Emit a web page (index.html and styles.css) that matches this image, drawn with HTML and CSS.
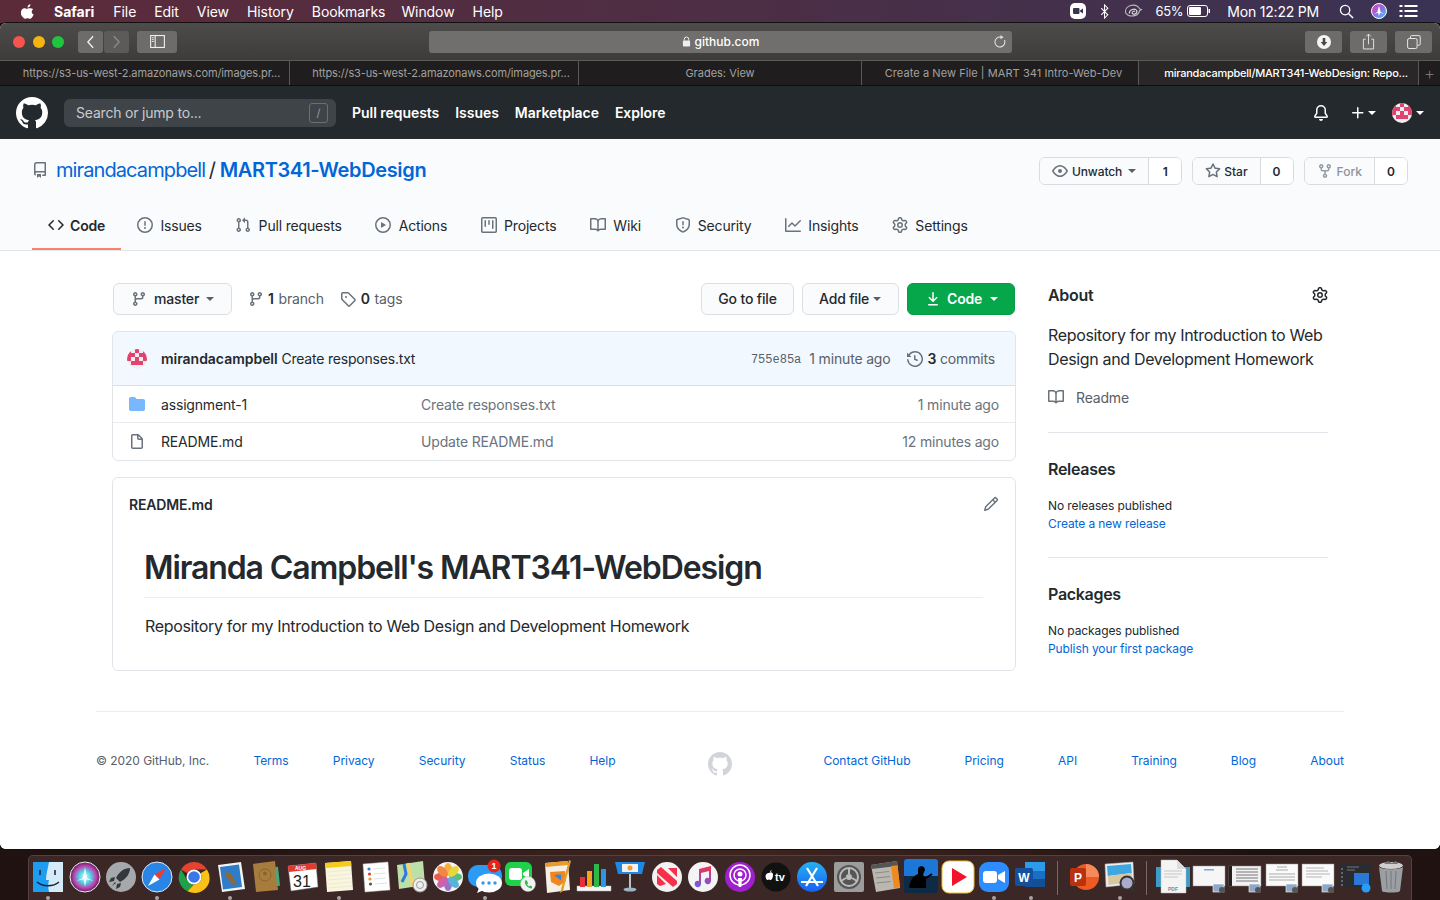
FILE: index.html
```html
<!DOCTYPE html>
<html lang="en">
<head>
<meta charset="utf-8">
<title>mirandacampbell/MART341-WebDesign</title>
<link rel="stylesheet" href="styles.css">
</head>
<body>
<svg class="defs" aria-hidden="true">
<defs><clipPath id="ac"><circle cx="10" cy="10" r="10"/></clipPath></defs>
<symbol id="i-mark" viewBox="0 0 16 16"><path fill-rule="evenodd" d="M8 0C3.58 0 0 3.58 0 8c0 3.54 2.29 6.53 5.47 7.59.4.07.55-.17.55-.38 0-.19-.01-.82-.01-1.49-2.01.37-2.53-.49-2.69-.94-.09-.23-.48-.94-.82-1.13-.28-.15-.68-.52-.01-.53.63-.01 1.08.58 1.23.82.72 1.21 1.87.87 2.33.66.07-.52.28-.87.51-1.07-1.78-.2-3.64-.89-3.64-3.95 0-.87.31-1.59.82-2.15-.08-.2-.36-1.02.08-2.12 0 0 .67-.21 2.2.82.64-.18 1.32-.27 2-.27.68 0 1.36.09 2 .27 1.53-1.04 2.2-.82 2.2-.82.44 1.1.16 1.92.08 2.12.51.56.82 1.27.82 2.15 0 3.07-1.87 3.75-3.65 3.95.29.25.54.73.54 1.48 0 1.07-.01 1.93-.01 2.2 0 .21.15.46.55.38A8.013 8.013 0 0016 8c0-4.42-3.58-8-8-8z"/></symbol>
<symbol id="i-repo" viewBox="0 0 16 16"><path fill-rule="evenodd" d="M2 2.5A2.5 2.5 0 014.5 0h8.75a.75.75 0 01.75.75v12.5a.75.75 0 01-.75.75h-2.5a.75.75 0 110-1.5h1.75v-2h-8a1 1 0 00-.714 1.7.75.75 0 01-1.072 1.05A2.495 2.495 0 012 11.5v-9zm10.5-1V9h-8c-.356 0-.694.074-1 .208V2.5a1 1 0 011-1h8zM5 12.25v3.25a.25.25 0 00.4.2l1.45-1.087a.25.25 0 01.3 0L8.6 15.7a.25.25 0 00.4-.2v-3.25a.25.25 0 00-.25-.25h-3.5a.25.25 0 00-.25.25z"/></symbol>
<symbol id="i-eye" viewBox="0 0 16 16"><path fill-rule="evenodd" d="M1.679 7.932c.412-.621 1.242-1.75 2.366-2.717C5.175 4.242 6.527 3.5 8 3.5c1.473 0 2.824.742 3.955 1.715 1.124.967 1.954 2.096 2.366 2.717a.119.119 0 010 .136c-.412.621-1.242 1.75-2.366 2.717C10.825 11.758 9.473 12.5 8 12.5c-1.473 0-2.824-.742-3.955-1.715C2.921 9.818 2.091 8.69 1.679 8.068a.119.119 0 010-.136zM8 2c-1.981 0-3.67.992-4.933 2.078C1.797 5.169.88 6.423.43 7.1a1.619 1.619 0 000 1.798c.45.678 1.367 1.932 2.637 3.024C4.329 13.008 6.019 14 8 14c1.981 0 3.67-.992 4.933-2.078 1.27-1.091 2.187-2.345 2.637-3.023a1.619 1.619 0 000-1.798c-.45-.678-1.367-1.932-2.637-3.023C11.671 2.992 9.981 2 8 2zm0 8a2 2 0 100-4 2 2 0 000 4z"/></symbol>
<symbol id="i-star" viewBox="0 0 16 16"><path fill-rule="evenodd" d="M8 .25a.75.75 0 01.673.418l1.882 3.815 4.21.612a.75.75 0 01.416 1.279l-3.046 2.97.719 4.192a.75.75 0 01-1.088.791L8 12.347l-3.766 1.98a.75.75 0 01-1.088-.79l.72-4.194L.818 6.374a.75.75 0 01.416-1.28l4.21-.611L7.327.668A.75.75 0 018 .25zm0 2.445L6.615 5.5a.75.75 0 01-.564.41l-3.097.45 2.24 2.184a.75.75 0 01.216.664l-.528 3.084 2.769-1.456a.75.75 0 01.698 0l2.77 1.456-.53-3.084a.75.75 0 01.216-.664l2.24-2.183-3.096-.45a.75.75 0 01-.564-.41L8 2.694v.001z"/></symbol>
<symbol id="i-fork" viewBox="0 0 16 16"><path fill-rule="evenodd" d="M5 3.25a.75.75 0 11-1.5 0 .75.75 0 011.5 0zm0 2.122a2.25 2.25 0 10-1.5 0v.878A2.25 2.25 0 005.75 8.5h1.5v2.128a2.251 2.251 0 101.5 0V8.5h1.5a2.25 2.25 0 002.25-2.25v-.878a2.25 2.25 0 10-1.5 0v.878a.75.75 0 01-.75.75h-4.5A.75.75 0 015 6.25v-.878zm3.75 7.378a.75.75 0 11-1.5 0 .75.75 0 011.5 0zm3-8.75a.75.75 0 100-1.5.75.75 0 000 1.5z"/></symbol>
<symbol id="i-code" viewBox="0 0 16 16"><path fill-rule="evenodd" d="M4.72 3.22a.75.75 0 011.06 1.06L2.06 8l3.72 3.72a.75.75 0 11-1.06 1.06L.47 8.53a.75.75 0 010-1.06l4.25-4.25zm6.56 0a.75.75 0 10-1.06 1.06L13.94 8l-3.72 3.72a.75.75 0 101.06 1.06l4.25-4.25a.75.75 0 000-1.06l-4.25-4.25z"/></symbol>
<symbol id="i-issue" viewBox="0 0 16 16"><path fill-rule="evenodd" d="M8 1.5a6.5 6.5 0 100 13 6.5 6.5 0 000-13zM0 8a8 8 0 1116 0A8 8 0 010 8zm9 3a1 1 0 11-2 0 1 1 0 012 0zm-.25-6.25a.75.75 0 00-1.5 0v3.5a.75.75 0 001.5 0v-3.5z"/></symbol>
<symbol id="i-pr" viewBox="0 0 16 16"><path fill-rule="evenodd" d="M7.177 3.073L9.573.677A.25.25 0 0110 .854v4.792a.25.25 0 01-.427.177L7.177 3.427a.25.25 0 010-.354zM3.75 2.5a.75.75 0 100 1.5.75.75 0 000-1.5zm-2.25.75a2.25 2.25 0 113 2.122v5.256a2.251 2.251 0 11-1.5 0V5.372A2.25 2.25 0 011.5 3.25zM11 2.5h-1V4h1a1 1 0 011 1v5.628a2.251 2.251 0 101.5 0V5A2.5 2.5 0 0011 2.5zm1 10.25a.75.75 0 111.5 0 .75.75 0 01-1.5 0zM3.75 12a.75.75 0 100 1.5.75.75 0 000-1.5z"/></symbol>
<symbol id="i-play" viewBox="0 0 16 16"><path fill-rule="evenodd" d="M1.5 8a6.5 6.5 0 1113 0 6.5 6.5 0 01-13 0zM8 0a8 8 0 100 16A8 8 0 008 0zM6.379 5.227A.25.25 0 006 5.442v5.117a.25.25 0 00.379.214l4.264-2.559a.25.25 0 000-.428L6.379 5.227z"/></symbol>
<symbol id="i-project" viewBox="0 0 16 16"><path fill-rule="evenodd" d="M1.75 0A1.75 1.75 0 000 1.75v12.5C0 15.216.784 16 1.75 16h12.5A1.75 1.75 0 0016 14.25V1.75A1.75 1.75 0 0014.25 0H1.75zM1.5 1.75a.25.25 0 01.25-.25h12.5a.25.25 0 01.25.25v12.5a.25.25 0 01-.25.25H1.75a.25.25 0 01-.25-.25V1.75zM11.75 3a.75.75 0 00-.75.75v7.5a.75.75 0 001.5 0v-7.5a.75.75 0 00-.75-.75zm-8.25.75a.75.75 0 011.5 0v5.5a.75.75 0 01-1.5 0v-5.5zM8 3a.75.75 0 00-.75.75v3.5a.75.75 0 001.5 0v-3.5A.75.75 0 008 3z"/></symbol>
<symbol id="i-book" viewBox="0 0 16 16"><path fill-rule="evenodd" d="M0 1.75A.75.75 0 01.75 1h4.253c1.227 0 2.317.59 3 1.501A3.744 3.744 0 0111.006 1h4.245a.75.75 0 01.75.75v10.5a.75.75 0 01-.75.75h-4.507a2.25 2.25 0 00-1.591.659l-.622.621a.75.75 0 01-1.06 0l-.622-.621A2.25 2.25 0 005.258 13H.75a.75.75 0 01-.75-.75V1.75zm8.755 3a2.25 2.25 0 012.25-2.25H14.5v9h-3.757c-.71 0-1.4.201-1.992.572l.004-7.322zm-1.504 7.324l.004-5.073-.002-2.253A2.25 2.25 0 005.003 2.5H1.5v9h3.757a3.75 3.75 0 011.994.574z"/></symbol>
<symbol id="i-shield" viewBox="0 0 16 16"><path fill-rule="evenodd" d="M7.467.133a1.75 1.75 0 011.066 0l5.25 1.68A1.75 1.75 0 0115 3.48V7c0 1.566-.32 3.182-1.303 4.682-.983 1.498-2.585 2.813-5.032 3.855a1.7 1.7 0 01-1.33 0c-2.447-1.042-4.049-2.357-5.032-3.855C1.32 10.182 1 8.566 1 7V3.48a1.75 1.75 0 011.217-1.667l5.25-1.68zm.61 1.429a.25.25 0 00-.153 0l-5.25 1.68a.25.25 0 00-.174.238V7c0 1.358.275 2.666 1.057 3.86.784 1.194 2.121 2.34 4.366 3.297a.2.2 0 00.154 0c2.245-.956 3.582-2.104 4.366-3.298C13.225 9.666 13.5 8.36 13.5 7V3.48a.25.25 0 00-.174-.237l-5.25-1.68zM9 10.5a1 1 0 11-2 0 1 1 0 012 0zm-.25-5.75a.75.75 0 10-1.5 0v3a.75.75 0 001.5 0v-3z"/></symbol>
<symbol id="i-graph" viewBox="0 0 16 16"><path fill-rule="evenodd" d="M1.5 1.75a.75.75 0 00-1.5 0v12.5c0 .414.336.75.75.75h14.5a.75.75 0 000-1.5H1.5V1.75zm14.28 2.53a.75.75 0 00-1.06-1.06L10 7.94 7.53 5.47a.75.75 0 00-1.06 0L3.22 8.72a.75.75 0 001.06 1.06L7 7.06l2.47 2.47a.75.75 0 001.06 0l5.25-5.25z"/></symbol>
<symbol id="i-gear" viewBox="0 0 16 16"><path fill-rule="evenodd" d="M7.429 1.525a6.593 6.593 0 011.142 0c.036.003.108.036.137.146l.289 1.105c.147.56.55.967.997 1.189.174.086.341.183.501.29.417.278.97.423 1.53.27l1.102-.303c.11-.03.175.016.195.046.219.31.41.641.573.989.014.031.022.11-.059.19l-.815.806c-.411.406-.562.957-.53 1.456a4.588 4.588 0 010 .582c-.032.499.119 1.05.53 1.456l.815.806c.08.08.073.159.059.19a6.494 6.494 0 01-.573.99c-.02.029-.086.074-.195.045l-1.103-.303c-.559-.153-1.112-.008-1.529.27-.16.107-.327.204-.5.29-.449.222-.851.628-.998 1.189l-.289 1.105c-.029.11-.101.143-.137.146a6.613 6.613 0 01-1.142 0c-.036-.003-.108-.037-.137-.146l-.289-1.105c-.147-.56-.55-.967-.997-1.189a4.502 4.502 0 01-.501-.29c-.417-.278-.97-.423-1.53-.27l-1.102.303c-.11.03-.175-.016-.195-.046a6.492 6.492 0 01-.573-.989c-.014-.031-.022-.11.059-.19l.815-.806c.411-.406.562-.957.53-1.456a4.587 4.587 0 010-.582c.032-.499-.119-1.05-.53-1.456l-.815-.806c-.08-.08-.073-.159-.059-.19a6.44 6.44 0 01.573-.99c.02-.029.086-.075.195-.045l1.103.303c.559.153 1.112.008 1.529-.27.16-.107.327-.204.5-.29.449-.222.851-.628.998-1.189l.289-1.105c.029-.11.101-.143.137-.146zM8 0c-.236 0-.47.01-.701.03-.743.065-1.29.615-1.458 1.261l-.29 1.106c-.017.066-.078.158-.211.224a5.994 5.994 0 00-.668.386c-.123.082-.233.09-.3.071L3.27 2.776c-.644-.177-1.392.02-1.82.63a7.977 7.977 0 00-.704 1.217c-.315.675-.111 1.422.363 1.891l.815.806c.05.048.098.147.088.294a6.084 6.084 0 000 .772c.01.147-.038.246-.088.294l-.815.806c-.474.469-.678 1.216-.363 1.891.2.428.436.835.704 1.218.428.609 1.176.806 1.82.63l1.103-.303c.066-.019.176-.011.299.071.213.143.436.272.668.386.133.066.194.158.212.224l.289 1.106c.169.646.715 1.196 1.458 1.26a8.094 8.094 0 001.402 0c.743-.064 1.29-.614 1.458-1.26l.29-1.106c.017-.066.078-.158.211-.224a5.98 5.98 0 00.668-.386c.123-.082.233-.09.3-.071l1.102.302c.644.177 1.392-.02 1.82-.63.268-.382.505-.789.704-1.217.315-.675.111-1.422-.364-1.891l-.814-.806c-.05-.048-.098-.147-.088-.294a6.1 6.1 0 000-.772c-.01-.147.039-.246.088-.294l.814-.806c.475-.469.679-1.216.364-1.891a7.992 7.992 0 00-.704-1.218c-.428-.609-1.176-.806-1.82-.63l-1.103.303c-.066.019-.176.011-.299-.071a5.991 5.991 0 00-.668-.386c-.133-.066-.194-.158-.212-.224L10.16 1.29C9.99.645 9.444.095 8.701.031A8.094 8.094 0 008 0zm1.5 8a1.5 1.5 0 11-3 0 1.5 1.5 0 013 0zM11 8a3 3 0 11-6 0 3 3 0 016 0z"/></symbol>
<symbol id="i-branch" viewBox="0 0 16 16"><path fill-rule="evenodd" d="M11.75 2.5a.75.75 0 100 1.5.75.75 0 000-1.5zm-2.25.75a2.25 2.25 0 113 2.122V6A2.5 2.5 0 0110 8.5H6a1 1 0 00-1 1v1.128a2.251 2.251 0 11-1.5 0V5.372a2.25 2.25 0 111.5 0v1.836A2.492 2.492 0 016 7h4a1 1 0 001-1v-.628A2.25 2.25 0 019.5 3.25zM4.25 12a.75.75 0 100 1.5.75.75 0 000-1.5zM3.5 3.25a.75.75 0 111.5 0 .75.75 0 01-1.5 0z"/></symbol>
<symbol id="i-tag" viewBox="0 0 16 16"><path fill-rule="evenodd" d="M2.5 7.775V2.75a.25.25 0 01.25-.25h5.025a.25.25 0 01.177.073l6.25 6.25a.25.25 0 010 .354l-5.025 5.025a.25.25 0 01-.354 0l-6.25-6.25a.25.25 0 01-.073-.177zm-1.5 0V2.75C1 1.784 1.784 1 2.75 1h5.025c.464 0 .91.184 1.238.513l6.25 6.25a1.75 1.75 0 010 2.474l-5.026 5.026a1.75 1.75 0 01-2.474 0l-6.25-6.25A1.75 1.75 0 011 7.775zM6 5a1 1 0 100 2 1 1 0 000-2z"/></symbol>
<symbol id="i-download" viewBox="0 0 16 16"><path fill-rule="evenodd" d="M7.47 10.78a.75.75 0 001.06 0l3.75-3.75a.75.75 0 00-1.06-1.06L8.75 8.44V1.75a.75.75 0 00-1.5 0v6.69L4.78 5.97a.75.75 0 00-1.06 1.06l3.75 3.75zM3.75 13a.75.75 0 000 1.5h8.5a.75.75 0 000-1.5h-8.5z"/></symbol>
<symbol id="i-history" viewBox="0 0 16 16"><path fill-rule="evenodd" d="M1.643 3.143L.427 1.927A.25.25 0 000 2.104V5.75c0 .138.112.25.25.25h3.646a.25.25 0 00.177-.427L2.715 4.215a6.5 6.5 0 11-1.18 4.458.75.75 0 10-1.493.154 8.001 8.001 0 101.6-5.684zM7.75 4a.75.75 0 01.75.75v2.992l2.028.812a.75.75 0 01-.557 1.392l-2.5-1A.75.75 0 017 8.25v-3.5A.75.75 0 017.75 4z"/></symbol>
<symbol id="i-file" viewBox="0 0 16 16"><path fill-rule="evenodd" d="M3.75 1.5a.25.25 0 00-.25.25v11.5c0 .138.112.25.25.25h8.5a.25.25 0 00.25-.25V6H9.75A1.75 1.75 0 018 4.25V1.5H3.75zm5.75.56v2.19c0 .138.112.25.25.25h2.19L9.5 2.06zM2 1.75C2 .784 2.784 0 3.75 0h5.086c.464 0 .909.184 1.237.513l3.414 3.414c.329.328.513.773.513 1.237v8.086A1.75 1.75 0 0112.25 15h-8.5A1.75 1.75 0 012 13.25V1.75z"/></symbol>
<symbol id="i-folder" viewBox="0 0 16 16"><path d="M1.75 1A1.75 1.75 0 000 2.75v10.5C0 14.216.784 15 1.75 15h12.5A1.75 1.75 0 0016 13.25v-8.5A1.75 1.75 0 0014.25 3h-6.5a.25.25 0 01-.2-.1l-.9-1.2c-.33-.44-.85-.7-1.4-.7h-4z"/></symbol>
<symbol id="i-pencil" viewBox="0 0 16 16"><path fill-rule="evenodd" d="M11.013 1.427a1.75 1.75 0 012.474 0l1.086 1.086a1.75 1.75 0 010 2.474l-8.61 8.61c-.21.21-.47.364-.756.445l-3.251.93a.75.75 0 01-.927-.928l.929-3.25a1.75 1.75 0 01.445-.758l8.61-8.61zm1.414 1.06a.25.25 0 00-.354 0L10.811 3.75l1.439 1.44 1.263-1.263a.25.25 0 000-.354l-1.086-1.086zM11.189 6.25L9.75 4.81l-6.286 6.287a.25.25 0 00-.064.108l-.558 1.953 1.953-.558a.249.249 0 00.108-.064l6.286-6.286z"/></symbol>
<symbol id="i-bell" viewBox="0 0 16 16"><path d="M8 16a2 2 0 001.985-1.75c.017-.137-.097-.25-.235-.25h-3.5c-.138 0-.252.113-.235.25A2 2 0 008 16z"/><path fill-rule="evenodd" d="M8 1.5A3.5 3.5 0 004.5 5v2.947c0 .346-.102.683-.294.97l-1.703 2.556a.018.018 0 00-.003.01l.001.006c0 .002.002.004.004.006a.017.017 0 00.006.004l.007.001h10.964l.007-.001a.018.018 0 00.006-.004.016.016 0 00.004-.006l.001-.007a.017.017 0 00-.003-.01l-1.703-2.554a1.75 1.75 0 01-.294-.97V5A3.5 3.5 0 008 1.5zM3 5a5 5 0 0110 0v2.947c0 .05.015.098.042.139l1.703 2.555A1.518 1.518 0 0113.482 13H2.518a1.518 1.518 0 01-1.263-2.36l1.703-2.554A.25.25 0 003 7.947V5z"/></symbol>
<symbol id="i-plus" viewBox="0 0 16 16"><path fill-rule="evenodd" d="M7.75 2a.75.75 0 01.75.75V7h4.25a.75.75 0 110 1.5H8.5v4.25a.75.75 0 11-1.5 0V8.5H2.75a.75.75 0 010-1.5H7V2.75A.75.75 0 017.75 2z"/></symbol>
<symbol id="i-identicon" viewBox="0 0 20 20"><circle cx="10" cy="10" r="10" fill="#f0eeee"/><g clip-path="url(#ac)"><path fill="#e0436f" d="M0 0h4v4H0zM8 0h4v4H8zM16 0h4v4h-4zM0 4h8v4H0zM12 4h8v4h-8zM0 8h4v4H0zM8 8h4v4H8zM16 8h4v4h-4zM4 12h12v4H4z"/></g></symbol>
<symbol id="i-shot" viewBox="0 0 36 36"><rect x="2" y="7" width="32" height="20" fill="#f6f6f6" stroke="#999" stroke-width=".5"/><rect x="13" y="10" width="10" height="1.5" fill="#7fa8d8"/><rect x="22" y="25" width="11" height="8" fill="#8fa8c8" stroke="#fff" stroke-width=".6"/><circle cx="31" cy="31" r="3" fill="#555"/></symbol>
</svg>

<header class="menubar">
  <nav class="menu-left">
    <svg class="apple" viewBox="0 0 16 18"><path fill="#fff" d="M11.6 0c.1 1.1-.3 2.100-.9 2.900-.7.800-1.700 1.400-2.700 1.300-.1-1 .4-2.100 1-2.800C9.600.6 10.700.1 11.600 0zM15 6.200c-1.100.7-1.800 1.800-1.800 3.100 0 1.500.9 2.800 2.300 3.400-.4 1.200-1 2.300-1.800 3.300-.7 1-1.500 2-2.700 2-1.200 0-1.600-.7-3-.7s-1.900.7-3 .7c-1.200 0-2-1.100-2.800-2.100C.6 14.400-.4 11.900 0 9.400.3 7.100 2 5.100 4.300 5c1.200 0 2.300.8 3 .8.700 0 2-1 3.400-.8 1.700.1 3.300.5 4.300 1.200z"/></svg>
    <span class="menu-app">Safari</span><span>File</span><span>Edit</span><span>View</span><span>History</span><span class="m-book">Bookmarks</span><span>Window</span><span>Help</span>
  </nav>
  <div class="menu-right">
    <svg class="st-zoom" viewBox="0 0 16 16"><rect width="16" height="16" rx="5" fill="#fff"/><rect x="3" y="5" width="6.500" height="6" rx="1" fill="#3c3350"/><path d="M10 7.500l3-2v5l-3-2z" fill="#3c3350"/></svg>
    <svg class="st-bt" viewBox="0 0 10 16"><path fill="none" stroke="#fff" stroke-width="1.100" d="M1 4.500l7 7-3.500 3.500V1L8 4.500l-7 7"/></svg>
    <svg class="st-cc" viewBox="0 0 20 16"><path d="M2 9a8 7 0 0115-4l2 1-2 1a8 7 0 01-15 2z" fill="none" stroke="#bbb" stroke-width="1.200"/><path d="M6 10c0-4 6-6 8-3 1 3-3 5-5 3 0-2 2-3 3-2" fill="none" stroke="#ddd" stroke-width="1.200"/></svg>
    <span class="st-pct">65%</span>
    <svg class="st-batt" viewBox="0 0 24 12"><rect x=".5" y=".5" width="20" height="11" rx="2.500" fill="none" stroke="#fff"/><rect x="2" y="2" width="12" height="8" rx="1" fill="#fff"/><rect x="21.500" y="4" width="1.500" height="4" fill="#fff"/></svg>
    <span class="st-time">Mon 12:22 PM</span>
    <svg class="st-search" viewBox="0 0 16 16"><circle cx="6.500" cy="6.500" r="5" fill="none" stroke="#fff" stroke-width="1.400"/><path d="M10.300 10.300L15 15" stroke="#fff" stroke-width="1.600"/></svg>
    <svg class="st-siri" viewBox="0 0 16 16"><defs><linearGradient id="sg" x1="0" y1="0" x2="1" y2="1"><stop offset="0" stop-color="#f53a9a"/><stop offset=".5" stop-color="#8a6ae8"/><stop offset="1" stop-color="#3ad8e8"/></linearGradient></defs><circle cx="8" cy="8" r="7.500" fill="url(#sg)" stroke="#fff"/><path d="M8 3l1.500 5L8 13 6.500 8z" fill="#fff"/><path d="M3 11l5-3 5 3-5-1.500z" fill="#fff"/></svg>
    <svg class="st-list" viewBox="0 0 18 14"><path fill="#fff" d="M0 1h3v2H0zM5 1h13v2H5zM0 6h3v2H0zM5 6h13v2H5zM0 11h3v2H0zM5 11h13v2H5z"/></svg>
  </div>
</header>

<div class="window">
  <div class="toolbar">
    <div class="lights"><i class="light red"></i><i class="light yellow"></i><i class="light green"></i></div>
    <div class="navbtns">
      <span class="tbtn back"><svg viewBox="0 0 10 16"><path d="M8 1.500L2 8l6 6.500" fill="none" stroke="#f2f2f2" stroke-width="1.500"/></svg></span>
      <span class="tbtn fwd"><svg viewBox="0 0 10 16"><path d="M2 1.500L8 8l-6 6.500" fill="none" stroke="#8c8b8a" stroke-width="1.500"/></svg></span>
    </div>
    <span class="tbtn sidebar"><svg viewBox="0 0 16 14"><rect x=".6" y=".6" width="14.800" height="12.800" fill="none" stroke="#eee" stroke-width="1.200"/><path d="M5.500 1v12" stroke="#eee" stroke-width="1.200"/><path d="M2 3h2M2 5h2M2 7h2" stroke="#eee"/></svg></span>
    <div class="urlbar">
      <span class="url"><svg viewBox="0 0 10 12"><path d="M2.500 5V3.500a2.500 2.500 0 015 0V5" fill="none" stroke="#eee" stroke-width="1.100"/><rect x="1" y="5" width="8" height="6.500" rx="1" fill="#eee"/></svg>github.com</span>
      <svg class="reload" viewBox="0 0 14 14"><path d="M11.500 5a5 5 0 11-3.500-2.900" fill="none" stroke="#e2e2e2" stroke-width="1.100"/><path d="M7.500 0l3 2.200-3 2z" fill="#e2e2e2"/></svg>
    </div>
    <div class="rightbtns">
      <span class="tbtn wide"><svg viewBox="0 0 14 14"><circle cx="7" cy="7" r="7" fill="#f4f4f4"/><path d="M5.700 3h2.600v4h2L7 11 3.700 7h2z" fill="#4a4847"/></svg></span>
      <span class="tbtn wide"><svg class="tall" viewBox="0 0 14 18"><path d="M4 6.500H1.500v10.500h11V6.500H10" fill="none" stroke="#e6e6e6"/><path d="M7 12V1M4.500 3.500L7 1l2.500 2.500" fill="none" stroke="#e6e6e6"/></svg></span>
      <span class="tbtn wide"><svg viewBox="0 0 14 14"><rect x=".6" y="3.500" width="9.500" height="10" rx="1.500" fill="none" stroke="#e6e6e6"/><path d="M3.500 3V1.800a1.200 1.200 0 011.200-1.200h7.300a1.200 1.200 0 011.200 1.200V9a1.200 1.200 0 01-1.200 1.200h-1.500" fill="none" stroke="#e6e6e6"/></svg></span>
    </div>
  </div>
  <div class="tabs">
    <div class="tab t-url">https://s3-us-west-2.amazonaws.com/images.pr...</div>
    <div class="tab t-url">https://s3-us-west-2.amazonaws.com/images.pr...</div>
    <div class="tab">Grades: View</div>
    <div class="tab t-new">Create a New File | MART 341 Intro-Web-Dev</div>
    <div class="tab active">mirandacampbell/MART341-WebDesign: Repo...</div>
    <div class="tab add">+</div>
  </div>

  <div class="page">
    <div class="gh-header">
      <svg class="gh-logo"><use href="#i-mark"/></svg>
      <div class="gh-search"><span>Search or jump to...</span><kbd>/</kbd></div>
      <nav class="gh-nav"><a>Pull requests</a><a>Issues</a><a>Marketplace</a><a>Explore</a></nav>
      <div class="gh-actions">
        <svg class="ic16 white"><use href="#i-bell"/></svg>
        <span class="gh-plus"><svg class="ic16 white"><use href="#i-plus"/></svg><i class="caret light-caret"></i></span>
        <span class="gh-avatar"><svg class="av20"><use href="#i-identicon"/></svg><i class="caret light-caret"></i></span>
      </div>
    </div>

    <div class="pagehead">
      <div class="pagehead-top">
        <h1 class="repo-title">
          <svg class="ic16 gray"><use href="#i-repo"/></svg>
          <a class="owner">mirandacampbell</a><span class="slash">/</span><a class="repo">MART341-WebDesign</a>
        </h1>
        <div class="repo-actions">
          <div class="pair"><span class="pair-btn unwatch"><svg class="ic16 gray"><use href="#i-eye"/></svg>Unwatch<i class="caret dark-caret wgap"></i></span><span class="pair-count">1</span></div>
          <div class="pair"><span class="pair-btn starb"><svg class="ic16 gray"><use href="#i-star"/></svg>Star</span><span class="pair-count">0</span></div>
          <div class="pair"><span class="pair-btn muted"><svg class="ic16 muted-ic"><use href="#i-fork"/></svg>Fork</span><span class="pair-count">0</span></div>
        </div>
      </div>
      <nav class="repo-nav">
        <a class="rtab selected"><svg class="ic16 dark"><use href="#i-code"/></svg>Code</a>
        <a class="rtab"><svg class="ic16 gray"><use href="#i-issue"/></svg>Issues</a>
        <a class="rtab"><svg class="ic16 gray"><use href="#i-pr"/></svg>Pull requests</a>
        <a class="rtab"><svg class="ic16 gray"><use href="#i-play"/></svg>Actions</a>
        <a class="rtab"><svg class="ic16 gray"><use href="#i-project"/></svg>Projects</a>
        <a class="rtab"><svg class="ic16 gray"><use href="#i-book"/></svg>Wiki</a>
        <a class="rtab"><svg class="ic16 gray"><use href="#i-shield"/></svg>Security</a>
        <a class="rtab"><svg class="ic16 gray"><use href="#i-graph"/></svg>Insights</a>
        <a class="rtab"><svg class="ic16 gray"><use href="#i-gear"/></svg>Settings</a>
      </nav>
    </div>

    <main class="container">
      <section class="main-col">
        <div class="filebar">
          <span class="btn master"><svg class="ic16 gray"><use href="#i-branch"/></svg><b>master</b><i class="caret dark-caret"></i></span>
          <span class="meta first"><svg class="ic16 gray"><use href="#i-branch"/></svg><span><b>1</b> branch</span></span>
          <span class="meta second"><svg class="ic16 gray"><use href="#i-tag"/></svg><span><b>0</b> tags</span></span>
          <span class="spacer"></span>
          <span class="btn gofile">Go to file</span>
          <span class="btn addfile">Add file<i class="caret dark-caret"></i></span>
          <span class="btn primary"><svg class="ic16 white"><use href="#i-download"/></svg>Code<i class="caret light-caret"></i></span>
        </div>
        <div class="filebox">
          <div class="commit-row">
            <svg class="av20"><use href="#i-identicon"/></svg>
            <span class="commit-msg"><b>mirandacampbell</b> Create responses.txt</span>
            <span class="spacer"></span>
            <code class="sha">755e85a</code>
            <span class="commit-age">1 minute ago</span>
            <span class="commits"><svg class="ic16 gray"><use href="#i-history"/></svg><span><b>3</b> commits</span></span>
          </div>
          <div class="file-row"><svg class="ic16 folder"><use href="#i-folder"/></svg><span class="fname">assignment-1</span><span class="fmsg">Create responses.txt</span><span class="fage">1 minute ago</span></div>
          <div class="file-row"><svg class="ic16 gray"><use href="#i-file"/></svg><span class="fname">README.md</span><span class="fmsg">Update README.md</span><span class="fage">12 minutes ago</span></div>
        </div>
        <article class="readme">
          <div class="readme-head"><b>README.md</b><svg class="ic16 gray"><use href="#i-pencil"/></svg></div>
          <div class="readme-body">
            <h2>Miranda Campbell's MART341-WebDesign</h2>
            <p>Repository for my Introduction to Web Design and Development Homework</p>
          </div>
        </article>
      </section>
      <aside class="side">
        <section class="side-sec about">
          <div class="side-title"><h3>About</h3><svg class="ic16 dark"><use href="#i-gear"/></svg></div>
          <p class="desc">Repository for my Introduction to Web Design and Development Homework</p>
          <div class="readme-link"><svg class="ic16 gray"><use href="#i-book"/></svg>Readme</div>
        </section>
        <section class="side-sec">
          <h3>Releases</h3>
          <p class="small">No releases published</p>
          <a class="small-link">Create a new release</a>
        </section>
        <section class="side-sec last">
          <h3>Packages</h3>
          <p class="small">No packages published</p>
          <a class="small-link">Publish your first package</a>
        </section>
      </aside>
    </main>

    <footer class="footer">
      <div class="foot-left"><span class="copy">© 2020 GitHub, Inc.</span><a>Terms</a><a>Privacy</a><a>Security</a><a>Status</a><a>Help</a></div>
      <svg class="foot-logo"><use href="#i-mark"/></svg>
      <div class="foot-right"><a>Contact GitHub</a><a>Pricing</a><a>API</a><a>Training</a><a>Blog</a><a>About</a></div>
    </footer>
  </div>
</div>

<div class="desktop">
  <div class="dock">
    <div class="di run"><svg viewBox="0 0 36 36"><rect x="3" y="3" width="30" height="30" fill="#1e9cf2"/><path d="M19 3h14v30H19c-1-4-1-9 0-12h-3c0-6 2-12 3-18z" fill="#d6ebfa"/><path d="M10 11v5M25 11v5" stroke="#123" stroke-width="1.500"/><path d="M7 23c6 5 16 5 22 0" fill="none" stroke="#123" stroke-width="1.300"/></svg></div>
    <div class="di"><svg viewBox="0 0 36 36"><defs><radialGradient id="sr" cx=".5" cy=".5" r=".55"><stop offset="0" stop-color="#eef"/><stop offset=".35" stop-color="#4fd8e8"/><stop offset=".7" stop-color="#c03aa8"/><stop offset="1" stop-color="#1a1a3c"/></radialGradient></defs><circle cx="18" cy="18" r="15" fill="url(#sr)" stroke="#eee"/><path d="M18 8l2 10-2 10-2-10zM9 22l9-4 9 4-9-2z" fill="#fff" opacity=".8"/></svg></div>
    <div class="di"><svg viewBox="0 0 36 36"><circle cx="18" cy="18" r="15" fill="#a6a9ab"/><path d="M27 9c-6 0-11 4-14 10l4 4c6-3 10-8 10-14zM12 18l-4 1-2 4 5-1zM18 24l-1 4-4 2 1-5zM12 23l-3 4 4-3z" fill="#34383c"/></svg></div>
    <div class="di run"><svg viewBox="0 0 36 36"><circle cx="18" cy="18" r="15" fill="#2a86e6" stroke="#dfe9f5"/><path d="M27 9L15.500 15.500 20.500 20.500z" fill="#f0392f"/><path d="M9 27l6.500-11.500 5 5z" fill="#fff"/></svg></div>
    <div class="di"><svg viewBox="0 0 36 36"><path d="M18 3a15 15 0 0113 7.500H18a7.500 7.500 0 00-6.500 3.750L5 10.500A15 15 0 0118 3z" fill="#e4432f"/><path d="M5 10.500l6.500 11.250A7.500 7.500 0 0018 25.500L11.500 32.200A15 15 0 015 10.500z" fill="#21a04a"/><path d="M31 10.500a15 15 0 01-19.500 21.700L18 25.500a7.500 7.500 0 006.500-11.250z" fill="#fbc116"/><circle cx="18" cy="18" r="7.500" fill="#fff"/><circle cx="18" cy="18" r="5.800" fill="#3b78e7"/></svg></div>
    <div class="di run"><svg viewBox="0 0 36 36"><path d="M6 6l23-3 4 27-23 3z" fill="#f4f4f4"/><path d="M8 8l19-2.500 3 22.500-19 2.500z" fill="#2f7cc8"/><path d="M14 12l6 4 5 9-4 1-7-8z" fill="#8a6a3c"/></svg></div>
    <div class="di"><svg viewBox="0 0 36 36"><path d="M4 5l22-3 3 29-22 2z" fill="#a87c3c"/><path d="M26 8l3-.3 2 19-3 .3z" fill="#4ba87c"/><circle cx="16" cy="16" r="6" fill="none" stroke="#8a6530"/><circle cx="16" cy="14.500" r="2" fill="#8a6530"/></svg></div>
    <div class="di"><svg viewBox="0 0 36 36"><path d="M3 7l28-3 2 24-27 4z" fill="#fff" stroke="#777" stroke-width=".5"/><path d="M3 7l28-3 .6 6-28 3z" fill="#df3b30"/><text x="10" y="11" class="d-aug">AUG</text><text x="8" y="28" class="d-31">31</text></svg></div>
    <div class="di run"><svg viewBox="0 0 36 36"><path d="M4 4l26-2 2 29-26 2z" fill="#faf6dc"/><path d="M4 4l26-2 .4 5-26 2z" fill="#f4cc1e"/><path d="M6 13l24-2M6 17l24-2M7 21l24-2M7 25l24-2M7 29l24-2" stroke="#ddd" stroke-width=".5"/></svg></div>
    <div class="di"><svg viewBox="0 0 36 36"><path d="M5 5l25-2 2 28-25 2z" fill="#fff" stroke="#bbb" stroke-width=".5"/><circle cx="11" cy="10" r="1.600" fill="#3b78e7"/><circle cx="11.500" cy="15" r="1.600" fill="#e63a2f"/><circle cx="12" cy="20" r="1.600" fill="#f09a1a"/><circle cx="12.500" cy="25" r="1.600" fill="#555"/><path d="M15 10l12-1M16 15l12-1M16 20l12-1M17 25l12-1" stroke="#ccc" stroke-width=".6"/></svg></div>
    <div class="di"><svg viewBox="0 0 36 36"><path d="M3 6l26-4 2 24-26 4z" fill="#bde0a8"/><path d="M14 4l5 24" stroke="#f6d66a" stroke-width="3"/><path d="M10 5l2 10-4 8" stroke="#2f7cd8" stroke-width="3" fill="none"/><circle cx="26" cy="26" r="7" fill="#eee" stroke="#999"/><circle cx="26" cy="26" r="3.500" fill="none" stroke="#999"/></svg></div>
    <div class="di"><svg viewBox="0 0 36 36"><circle cx="18" cy="18" r="15" fill="#f4f4f4"/><g opacity=".85"><ellipse cx="18" cy="10.500" rx="4" ry="6.500" fill="#f4a71e"/><ellipse cx="25.500" cy="18" rx="6.500" ry="4" fill="#3fb56a"/><ellipse cx="18" cy="25.500" rx="4" ry="6.500" fill="#8a5cc8"/><ellipse cx="10.500" cy="18" rx="6.500" ry="4" fill="#e8432f"/><ellipse cx="23.500" cy="12.500" rx="4" ry="6.500" fill="#e8d01e" transform="rotate(45 23.500 12.500)"/><ellipse cx="23.500" cy="23.500" rx="4" ry="6.500" fill="#3aa8d8" transform="rotate(-45 23.500 23.500)"/><ellipse cx="12.500" cy="23.500" rx="4" ry="6.500" fill="#c848a0" transform="rotate(45 12.500 23.500)"/><ellipse cx="12.500" cy="12.500" rx="4" ry="6.500" fill="#f0752a" transform="rotate(-45 12.500 12.500)"/></g></svg></div>
    <div class="di run"><svg viewBox="0 0 36 36"><rect x="1" y="6" width="34" height="22" rx="10" fill="#2a9cf5"/><ellipse cx="22" cy="24" rx="13" ry="9.500" fill="#fff"/><path d="M12 29l-2 5 7-3z" fill="#fff"/><circle cx="16" cy="24" r="1.700" fill="#2a9cf5"/><circle cx="22" cy="24" r="1.700" fill="#2a9cf5"/><circle cx="28" cy="24" r="1.700" fill="#2a9cf5"/><circle cx="27" cy="7" r="6.500" fill="#e8231e"/><text x="27" y="10" class="d-badge">1</text></svg></div>
    <div class="di"><svg viewBox="0 0 36 36"><rect x="2" y="3" width="27" height="24" rx="6" fill="#1fd14a"/><rect x="6" y="9" width="13" height="12" rx="3" fill="#fff"/><path d="M20 14l6-4v10l-6-4z" fill="#fff"/><circle cx="25" cy="25" r="7.500" fill="#f2f2f2" stroke="#bbb" stroke-width=".5"/><path d="M22 21.500l2 0 1 3-1 1 2 2 1-1 2 1v2c-4 0-8-4-7-8z" fill="#2db84a"/></svg></div>
    <div class="di"><svg viewBox="0 0 36 36"><path d="M5 4l23-2 2 29-23 3z" fill="#f4f0e8"/><path d="M5 4l23-2 .4 4-23 2z" fill="#e89a2a"/><path d="M10 13l15-1 1 10-7 5-8-4z" fill="#f2861e"/><path d="M14 16l7-.5 0 6z" fill="#2a86e6"/><path d="M29 1l2 1-8 30-3 2z" fill="#e0a030"/></svg></div>
    <div class="di"><svg viewBox="0 0 36 36"><path d="M1 27h34v5H1z" fill="#f6f6f6" stroke="#bbb" stroke-width=".5"/><rect x="4" y="18" width="5" height="10" fill="#e8303a"/><rect x="11" y="12" width="5" height="16" fill="#f5a31e"/><rect x="18" y="5" width="5" height="23" fill="#2eb84a"/><rect x="25" y="10" width="5" height="18" fill="#2a96e6"/></svg></div>
    <div class="di"><svg viewBox="0 0 36 36"><path d="M3 3h30l-3 12H6z" fill="#1e88e5"/><rect x="10" y="5" width="16" height="8" fill="#f2f2f2"/><circle cx="18" cy="9" r="2.500" fill="#f0a02a"/><path d="M17 15h2v14h-2z" fill="#b9c4cc"/><ellipse cx="18" cy="30.500" rx="6.500" ry="2" fill="#9fb4c4"/></svg></div>
    <div class="di"><svg viewBox="0 0 36 36"><circle cx="18" cy="18" r="15" fill="#f2f2f2"/><path d="M8 11l4-3 16 14v3l-4 3L8 14z" fill="#f6304a"/><path d="M8 16l9 9-6 2-3-2zM19 9l9 0v9z" fill="#f6304a"/></svg></div>
    <div class="di"><svg viewBox="0 0 36 36"><circle cx="18" cy="18" r="15" fill="#f4f4f4"/><defs><linearGradient id="mu" x1="0" y1="0" x2="0" y2="1"><stop offset="0" stop-color="#f6304a"/><stop offset="1" stop-color="#6a5cf0"/></linearGradient></defs><path d="M14 10l12-3v15a3.200 3.200 0 11-2-3V12l-8 2v11a3.200 3.200 0 11-2-3z" fill="url(#mu)"/></svg></div>
    <div class="di"><svg viewBox="0 0 36 36"><circle cx="18" cy="18" r="15" fill="#a020d0"/><circle cx="18" cy="16" r="10" fill="none" stroke="#fff" stroke-width="1.500"/><circle cx="18" cy="16" r="6" fill="none" stroke="#fff" stroke-width="1.500"/><circle cx="18" cy="15" r="2.500" fill="#fff"/><path d="M16 19h4l-.7 9h-2.600z" fill="#fff"/></svg></div>
    <div class="di"><svg viewBox="0 0 36 36"><circle cx="18" cy="18" r="14.500" fill="#111"/><text x="17" y="22" class="d-tv">tv</text><path d="M11 14c1-1 3-1 3 0 1 0 1 1 1 2 0 2-1 5-2.500 5-1 0-1-.5-1.500-.5S10 21 9.500 21C8 21 7 17 8 15.500 9 14 10 14 11 14zM12 13c0-1 1-2 1.500-2 0 1-.5 2-1.500 2z" fill="#fff"/></svg></div>
    <div class="di"><svg viewBox="0 0 36 36"><defs><linearGradient id="ap" x1="0" y1="0" x2="0" y2="1"><stop offset="0" stop-color="#22b2f6"/><stop offset="1" stop-color="#1a5ef0"/></linearGradient></defs><circle cx="18" cy="18" r="15" fill="url(#ap)"/><path d="M13 9l11 18M23 9L12 27M7 23h22" stroke="#fff" stroke-width="2.200" fill="none"/></svg></div>
    <div class="di"><svg viewBox="0 0 36 36"><rect x="3" y="3" width="30" height="30" rx="2" fill="#9c9c9c"/><circle cx="18" cy="18" r="12" fill="#555"/><circle cx="18" cy="18" r="9" fill="none" stroke="#bbb" stroke-width="2"/><circle cx="18" cy="18" r="3" fill="#bbb"/><path d="M18 9v6M10 22l5-3M26 22l-5-3" stroke="#bbb" stroke-width="2"/></svg></div>
    <div class="di"><svg viewBox="0 0 36 36"><path d="M4 6l26-4 3 27-24 4z" fill="#b9b7b0"/><path d="M4 6l26-4 .5 5-26 3z" fill="#555"/><path d="M24 7l6.500-.8 2.500 22-6 1z" fill="#f08a1e"/><path d="M8 14l14-1.500M9 19l14-1.500M9.500 24l14-1.500" stroke="#8a8a86"/></svg></div>
    <div class="di"><svg viewBox="0 0 36 36"><rect x="0" y="0" width="34" height="34" rx="3" fill="#0e2a44"/><path d="M0 3a3 3 0 013-3h28a3 3 0 013 3v14H0z" fill="#1c78d8"/><path d="M14 10a3.500 3.500 0 116 3l-1 3c4 3 3 10 3 13H5c1-6 3-12 9-14z" fill="#000"/><path d="M19 21l9-6" stroke="#000" stroke-width="2"/></svg></div>
    <div class="di"><svg viewBox="0 0 36 36"><rect x="2" y="2" width="32" height="32" rx="7" fill="#fff" stroke="#f4c02a"/><path d="M12 9l15 9-15 9z" fill="#f0142a"/></svg></div>
    <div class="di run"><svg viewBox="0 0 36 36"><rect x="3" y="3" width="30" height="30" rx="9" fill="#2d8cff"/><rect x="7" y="12" width="14" height="12" rx="3" fill="#fff"/><path d="M22 16l7-4v12l-7-4z" fill="#fff"/></svg></div>
    <div class="di run"><svg viewBox="0 0 36 36"><path d="M12 3h20v9H12z" fill="#2b9bea"/><path d="M12 12h20v8H12z" fill="#1a6fc4"/><path d="M12 20h20v8H12z" fill="#134f94"/><rect x="2" y="9" width="18" height="18" rx="2" fill="#1450a0"/><text x="11" y="23" class="d-word">W</text></svg></div>
    <div class="dsep"></div>
    <div class="di"><svg viewBox="0 0 36 36"><circle cx="20" cy="18" r="13" fill="#ee5a24"/><path d="M20 5a13 13 0 0113 13H20z" fill="#f68a58"/><rect x="4" y="9" width="16" height="18" rx="2" fill="#b8320f"/><text x="12" y="23" class="d-word">P</text></svg></div>
    <div class="di run"><svg viewBox="0 0 36 36"><path d="M3 5l28-2 1 22-28 3z" fill="#eee" stroke="#aaa" stroke-width=".5"/><path d="M5 7l24-2 .8 9-24 3z" fill="#3ea6e0"/><path d="M5.800 17l24-3 .7 9-24 3z" fill="#d8c8a0"/><circle cx="25" cy="24" r="6.500" fill="#aac" stroke="#333" stroke-width="2"/><path d="M29 29l3 3" stroke="#333" stroke-width="2.500"/></svg></div>
    <div class="dsep"></div>
    <div class="di"><svg viewBox="0 0 36 36"><path d="M1 8h34v20H1z" fill="#3c9cc8"/><path d="M6 1h16l9 9v24H6z" fill="#f4f4f4" stroke="#bbb" stroke-width=".5"/><path d="M22 1v9h9z" fill="#ddd"/><path d="M9 12h18M9 15h18M9 18h14" stroke="#aaa" stroke-width=".6"/><text x="18" y="32" class="d-pdf">PDF</text></svg></div>
    <div class="di"><svg><use href="#i-shot"/></svg></div>
    <div class="di"><svg viewBox="0 0 36 36"><rect x="2" y="7" width="32" height="20" fill="#f2f2f2" stroke="#888" stroke-width=".5"/><rect x="2" y="7" width="3" height="20" fill="#222"/><path d="M9 10h22M9 13h22M9 16h22M9 19h22M9 22h22" stroke="#777"/><rect x="22" y="25" width="11" height="8" fill="#8fa8c8" stroke="#fff" stroke-width=".6"/><circle cx="31" cy="31" r="3" fill="#555"/></svg></div>
    <div class="di"><svg viewBox="0 0 36 36"><rect x="2" y="5" width="32" height="22" fill="#fafafa" stroke="#999" stroke-width=".5"/><path d="M13 8h10M12 11h12M5 15h26M5 18h26M5 21h26" stroke="#888" stroke-width=".7"/><rect x="22" y="25" width="11" height="8" fill="#8fa8c8" stroke="#fff" stroke-width=".6"/><circle cx="31" cy="31" r="3" fill="#555"/></svg></div>
    <div class="di"><svg viewBox="0 0 36 36"><rect x="2" y="5" width="32" height="22" fill="#fafafa" stroke="#999" stroke-width=".5"/><path d="M6 9h18M6 12h22M6 15h24M6 18h16" stroke="#999" stroke-width=".7"/><rect x="22" y="25" width="11" height="8" fill="#8fa8c8" stroke="#fff" stroke-width=".6"/><circle cx="31" cy="31" r="3" fill="#555"/></svg></div>
    <div class="di"><svg viewBox="0 0 36 36"><rect x="2" y="5" width="32" height="24" fill="#2c2c30"/><path d="M5 9v18" stroke="#666" stroke-width="2" stroke-dasharray="2 2"/><path d="M10 8h12M10 11h8" stroke="#777"/><rect x="17" y="14" width="15" height="12" fill="#2a78d8"/><circle cx="29" cy="29" r="4.500" fill="#2a9cf5"/></svg></div>
    <div class="di"><svg viewBox="0 0 36 36"><ellipse cx="18" cy="6.500" rx="12" ry="3.500" fill="#cfcfcf"/><path d="M6 8l3 24c1 2 17 2 18 0l3-24c-3 3-21 3-24 0z" fill="#9a9fa3"/><path d="M11 5l4-3 4 2 4-2 2 3z" fill="#777"/><path d="M13 12l1 18M18 12v18M23 12l-1 18" stroke="#777"/></svg></div>
  </div>
</div>
</body>
</html>
```

FILE: styles.css
```css
* { box-sizing: border-box; }
html, body { margin: 0; padding: 0; }
body {
  width: 1440px; height: 900px; overflow: hidden;
  display: flex; flex-direction: column;
  font-family: Inter, "Noto Sans", sans-serif; color: #24292e;
  background: radial-gradient(ellipse at 50% 120%, #4a2a24 0%, #1d1110 55%, #241514 100%);
}
.defs { position: absolute; width: 0; height: 0; }
a { text-decoration: none; color: inherit; }
h1, h2, h3, p { margin: 0; }
i { display: block; font-style: normal; }

/* menu bar */
.menubar {
  height: 23px; flex: none; display: flex; align-items: center; justify-content: space-between;
  padding: 0 22px 1px 21px; color: #fff; font-size: 14px; letter-spacing: -.08px;
  background: linear-gradient(90deg, #5c2b3a 0%, #4d2e45 50%, #3a3353 100%);
}
.menu-left { display: flex; align-items: center; gap: 18px; }
.menu-left .apple { width: 13px; height: 15px; margin-right: 2px; }
.menu-app { font-weight: 700; letter-spacing: 0; margin-right: 1px; }
.m-book { margin-right: -2px; }
.menu-right { display: flex; align-items: center; }
.st-zoom { width: 16px; height: 16px; margin-right: 14px; }
.st-bt { width: 10px; height: 15px; margin-right: 13px; }
.st-cc { width: 20px; height: 15px; margin-right: 12px; }
.st-pct { font-size: 13px; letter-spacing: -.3px; margin-right: 4px; }
.st-batt { width: 24px; height: 12px; margin-right: 16px; }
.st-time { margin-right: 20px; letter-spacing: -.2px; }
.st-search { width: 15px; height: 15px; margin-right: 17px; }
.st-siri { width: 16px; height: 16px; margin-right: 12px; }
.st-list { width: 19px; height: 14px; }

/* window */
.window {
  height: 826px; flex: none; display: flex; flex-direction: column; overflow: hidden;
  border-radius: 6px; background: #fff; box-shadow: 0 0 0 1px #111;
}
.toolbar {
  height: 38px; flex: none; display: flex; align-items: center; padding: 0 8px 0 13px;
  background: linear-gradient(180deg, #4e4c4a, #3e3c3b); border-bottom: 1px solid #5b5a59;
}
.lights { display: flex; gap: 7.500px; margin-right: 14px; }
.light { width: 12px; height: 12px; border-radius: 50%; }
.red { background: #f5554e; } .yellow { background: #f5b50f; } .green { background: #1ec53f; }
.navbtns { display: flex; gap: 1px; margin-right: 8px; }
.tbtn { display: flex; align-items: center; justify-content: center; height: 22px; background: #6e6c6b; border-radius: 3px; }
.tbtn.back, .tbtn.fwd { width: 25px; }
.tbtn.fwd { background: #5d5b5a; }
.tbtn.back svg, .tbtn.fwd svg { width: 9px; height: 14px; }
.tbtn.sidebar { width: 40px; margin-right: 252px; }
.tbtn.sidebar svg { width: 15px; height: 13px; }
.urlbar {
  width: 583px; height: 22px; display: flex; align-items: center; justify-content: center; position: relative;
  background: #706f6e; border-radius: 3px; color: #fff; font-size: 12px; font-weight: 500;
}
.url { display: flex; align-items: center; gap: 4px; }
.url svg { width: 9px; height: 11px; }
.reload { position: absolute; right: 5px; top: 4px; width: 14px; height: 14px; }
.rightbtns { display: flex; gap: 8px; margin-left: auto; }
.tbtn.wide { width: 37px; }
.tbtn.wide svg { width: 14px; height: 14px; }
.tbtn.wide svg.tall { width: 13px; height: 17px; }

.tabs {
  height: 25px; flex: none; display: grid; grid-template-columns: 290px 289px 283px 277px 280px 1fr;
  background: #1f1d1d; border-bottom: 1px solid #0d0d0d; font-size: 11px; color: #a3a1a0;
}
.tab { display: flex; align-items: center; justify-content: center; border-right: 1px solid #5a5958; white-space: nowrap; overflow: hidden; }
.tab.t-url { padding-left: 14px; letter-spacing: -.12px; }
.tab.t-new { padding-left: 7px; letter-spacing: .07px; }
.tab.active { color: #fff; font-weight: 500; background: #292727; padding-left: 15px; letter-spacing: -.23px; }
.tab.add { border-right: 0; font-size: 18px; font-weight: 200; color: #8a8887; }

.page { flex: 1; display: flex; flex-direction: column; background: #fff; min-height: 0; letter-spacing: -.17px; }

/* github header */
.gh-header { height: 53px; flex: none; display: flex; align-items: center; background: #24292e; padding: 0 16px; color: #fff; }
.gh-logo { width: 32px; height: 32px; fill: #fff; margin-right: 16px; flex: none; }
.gh-search {
  width: 272px; height: 28px; display: flex; align-items: center; justify-content: space-between;
  padding: 0 8px 0 12px; background: #3f4448; border-radius: 6px; color: #c8cbce; font-size: 14px; margin-right: 16px; letter-spacing: -.2px;
}
.gh-search kbd {
  width: 19px; height: 20px; border: 1px solid #6a6f73; border-radius: 3px; display: flex; align-items: center; justify-content: center;
  font: 11px Inter, sans-serif; color: #9a9ea1;
}
.gh-nav { display: flex; gap: 16px; font-size: 14px; font-weight: 600; letter-spacing: -.04px; }
.gh-actions { margin-left: auto; display: flex; align-items: center; gap: 16px; }
.gh-plus { display: flex; align-items: center; gap: 2px; margin-left: 5px; }
.gh-avatar { display: flex; align-items: center; gap: 4px; }
.ic16 { width: 16px; height: 16px; flex: none; }
.white { fill: #fff; }
.gray { fill: #6a737d; }
.dark { fill: #24292e; }
.muted-ic { fill: #959da5; }
.folder { fill: #79b8ff; }
.av20 { width: 20px; height: 20px; flex: none; }
.caret { width: 0; height: 0; border: 4px solid transparent; border-bottom-width: 0; }
.light-caret { border-top-color: #fff; }
.dark-caret { border-top-color: #586069; }

/* page head */
.pagehead { height: 112px; flex: none; background: #fafbfc; border-bottom: 1px solid #e1e4e8; display: flex; flex-direction: column; }
.pagehead-top { display: flex; justify-content: space-between; align-items: center; padding: 18px 32px 0 32px; height: 46px; }
.repo-title { display: flex; align-items: center; font-size: 20px; font-weight: 400; color: #586069; white-space: nowrap; padding-bottom: 2px; }
.repo-title .ic16 { margin-right: 8px; }
.owner { color: #0366d6; letter-spacing: -.9px; }
.repo { color: #0366d6; font-weight: 600; letter-spacing: -.36px; }
.slash { margin: 0 4px 0 3.500px; color: #24292e; }
.repo-actions { display: flex; gap: 10px; letter-spacing: 0; }
.pair { display: flex; height: 28px; border: 1px solid #d9dcdf; border-radius: 6px; font-size: 12px; font-weight: 500; overflow: hidden; }
.pair-btn { display: flex; align-items: center; gap: 4px; padding: 0 12px; background: #fafbfc; border-right: 1px solid #d9dcdf; }
.pair-btn.muted { color: #8c939a; }
.pair-btn.starb { gap: 3px; }
.pair-btn.unwatch { letter-spacing: -.1px; }
.wgap { margin-left: 2px; }
.pair-count { display: flex; align-items: center; justify-content: center; width: 32px; background: #fff; font-weight: 600; }
.repo-nav { display: flex; padding: 0 32px; margin-top: auto; height: 48px; font-size: 14px; }
.rtab { display: flex; align-items: center; gap: 7.200px; padding: 0 17.700px 0 16px; border-bottom: 2px solid transparent; height: 48px; margin-bottom: -1px; }
.rtab.selected { font-weight: 600; border-bottom-color: #f9826c; padding-right: 16px; gap: 6px; }

/* main */
.container { display: flex; gap: 32px; padding: 32px 0 0 112px; flex: none; }
.main-col { width: 904px; flex: none; }
.filebar { display: flex; align-items: center; height: 32px; padding-left: 1px; padding-right: 1px; font-size: 14px; margin-bottom: 16px; }
.btn {
  display: flex; align-items: center; height: 32px; padding: 0 16px 1px; border: 1px solid #dcdfe2; border-radius: 6px;
  background: #fafbfc; font-weight: 500; margin-left: 8px; white-space: nowrap;
}
.btn b { font-weight: 500; }
.btn.master { margin-left: 0; width: 119px; gap: 7px; padding-left: 17px; }
.btn.gofile { width: 93px; justify-content: center; padding: 0 0 1px; }
.btn.addfile { width: 97px; gap: 4px; }
.btn.primary { background: #06a64a; border-color: #059c44; color: #fff; font-weight: 600; width: 108px; padding: 0 0 1px 17px; gap: 6px; }
.btn.primary .caret { margin-left: 2px; }
.meta { display: flex; align-items: center; gap: 3px; color: #586069; margin-left: 16px; white-space: nowrap; padding-bottom: 1px; }
.meta svg { margin-top: 1px; }
.meta b { color: #24292e; font-weight: 600; margin-right: 1px; }
.meta.first { gap: 4px; }
.meta.second { gap: 5px; }
.spacer { flex: 1; }

.filebox { border: 1px solid #e1e4e8; border-radius: 6px; overflow: hidden; font-size: 14px; }
.commit-row {
  height: 55px; display: flex; align-items: center; padding: 0 20px 0 14px; background: #f1f8ff;
  border: 1px solid #c8e1ff; margin: -1px -1px 0; border-radius: 6px 6px 0 0; border-bottom-color: #d8e2ec;
}
.commit-msg { margin-left: 14px; white-space: nowrap; letter-spacing: -.2px; }
.commit-msg b { font-weight: 600; letter-spacing: -.03px; }
.sha { font-family: "Liberation Mono", monospace; font-size: 12px; color: #586069; margin-top: 2px; letter-spacing: 0; }
.commit-age { color: #586069; margin-left: 8px; }
.commits { display: flex; align-items: center; gap: 5px; color: #586069; margin-left: 16px; }
.commits b { color: #24292e; font-weight: 600; }
.file-row { height: 37px; display: flex; align-items: center; padding: 0 16px; border-bottom: 1px solid #e8eaed; }
.file-row:last-child { border-bottom: 0; }
.fname { margin-left: 16px; width: 260px; }
.fmsg { color: #6a737d; }
.fage { margin-left: auto; color: #6a737d; }

.readme { margin-top: 16px; border: 1px solid #e1e4e8; border-radius: 6px; height: 194px; }
.readme-head { display: flex; justify-content: space-between; align-items: center; padding: 17px 16px 0; font-size: 14px; height: 35px; }
.readme-head b { font-weight: 600; }
.readme-body { padding: 35px 32px 0; }
.readme-body h2 { font-size: 32px; font-weight: 600; line-height: 40px; padding-bottom: 9px; border-bottom: 1px solid #eaecef; letter-spacing: -1.1px; margin-left: -1px; }
.readme-body p { font-size: 16px; line-height: 24px; margin-top: 16px; letter-spacing: -.34px; }

/* sidebar */
.side { width: 280px; flex: none; }
.side-sec { padding: 34px 0 24px; border-bottom: 1px solid #e1e4e8; height: 125px; }
.side-sec.about { height: 150px; padding-top: 0; }
.side-sec.last { border-bottom: 0; height: auto; padding-bottom: 0; }
.side h3 { font-size: 16px; font-weight: 600; line-height: 24px; margin-top: -10px; letter-spacing: -.3px; }
.side-sec.about h3 { margin-top: 0; }
.side-title { display: flex; justify-content: space-between; align-items: center; height: 24px; }
.desc { font-size: 16px; line-height: 24px; margin-top: 16px; letter-spacing: -.34px; }
.readme-link { display: flex; align-items: center; gap: 12px; margin-top: 14px; font-size: 14px; color: #586069; height: 24px; }
.small { font-size: 12px; line-height: 18px; margin-top: 16px; letter-spacing: -.1px; }
.small-link { display: block; font-size: 12px; line-height: 18px; color: #0366d6; letter-spacing: -.1px; }

/* footer */
.footer {
  margin: 40px 96px 0; padding-top: 40px; border-top: 1px solid #eaecef; display: grid; grid-template-columns: 1fr auto 1fr; font-size: 12px; color: #586069; line-height: 18px; letter-spacing: 0;
}
.foot-left { display: flex; gap: 44.250px; letter-spacing: -.05px; }
.foot-left a, .foot-right a { color: #0366d6; }
.foot-right { display: flex; gap: 54px; justify-content: flex-end; }
.foot-logo { width: 24px; height: 24px; fill: #d1d5da; }

/* dock */
.desktop { flex: 1; padding: 6px 0 0 28px; min-height: 0; }
.dock {
  width: 1384px; height: 45px; display: flex; padding-left: 1px; background: #3b2725; border: 1px solid #54403d; border-bottom: 0; border-radius: 5px 5px 0 0;
}
.di { width: 36.400px; flex: none; height: 44px; padding-top: 3px; }
.di svg { width: 36px; height: 36px; display: block; margin: 0 auto; overflow: visible; }
.di.run::after { content: ""; display: block; width: 4px; height: 4px; border-radius: 50%; background: #a9a4a3; margin: 1px auto 0; }
.dsep { width: 1px; height: 34px; margin: 5px 7.700px 0; background: #7a6a67; flex: none; }
.d-aug { font: 700 5px "Liberation Sans", sans-serif; fill: #fff; }
.d-31 { font: 400 16px "Liberation Sans", sans-serif; fill: #222; }
.d-badge { font: 700 9px "Liberation Sans", sans-serif; fill: #fff; text-anchor: middle; }
.d-tv { font: 600 11px "Liberation Sans", sans-serif; fill: #fff; }
.d-word { font: 700 12px "Liberation Sans", sans-serif; fill: #fff; text-anchor: middle; }
.d-pdf { font: 700 5px "Liberation Sans", sans-serif; fill: #888; text-anchor: middle; }
```
